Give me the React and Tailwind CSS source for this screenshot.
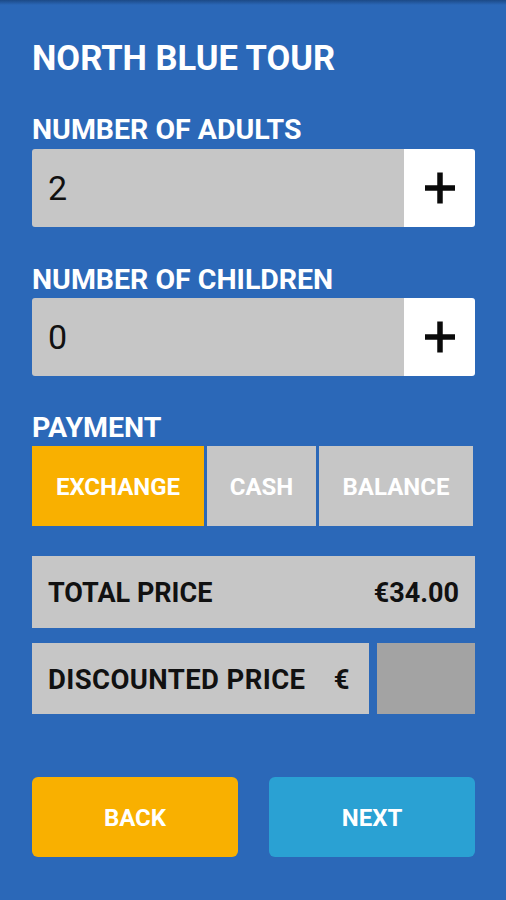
import React from "react";

function Plus() {
  return (
    <svg width="32" height="34" viewBox="0 0 32 34" fill="none">
      <path d="M16 1.5V32.5M1 17H31" stroke="#0a0a0a" strokeWidth="5.5" />
    </svg>
  );
}

function Counter({ value }) {
  return (
    <div className="flex h-[78px] w-[443px] overflow-hidden rounded-[3px]">
      <div className="flex flex-1 items-center bg-[#c6c6c6] pl-[16px] text-[34px] text-[#111]">
        {value}
      </div>
      <div className="flex w-[71px] items-center justify-center bg-white">
        <Plus />
      </div>
    </div>
  );
}

export default function App() {
  return (
    <div
      className="relative min-h-[900px] w-[506px] bg-[#2b68b8]"
      style={{ fontFamily: "Roboto, 'Noto Sans', sans-serif" }}
    >
      <div className="h-[5px] w-full bg-gradient-to-b from-[#1c4a87] to-[#2b68b8]" />
      <div className="flex flex-col pl-[32px] pr-[31px] pt-[33px]">
        <h1 className="text-[34.5px] font-bold leading-[40px] text-white">NORTH BLUE TOUR</h1>

        <div className="mt-[36px] text-[28.5px] font-bold leading-[32px] text-white">NUMBER OF ADULTS</div>
        <div className="mt-[3px]">
          <Counter value="2" />
        </div>

        <div className="mt-[37px] text-[28.5px] font-bold leading-[32px] text-white">NUMBER OF CHILDREN</div>
        <div className="mt-[2px]">
          <Counter value="0" />
        </div>

        <div className="mt-[36px] text-[28.5px] font-bold leading-[32px] text-white">PAYMENT</div>
        <div className="mt-[2px] flex h-[80px] gap-[3px] text-[24px] font-bold text-white">
          <div className="flex w-[172px] items-center justify-center bg-[#f9b000] pt-[2px]">EXCHANGE</div>
          <div className="flex w-[109px] items-center justify-center bg-[#c6c6c6] pt-[2px]">CASH</div>
          <div className="flex w-[154px] items-center justify-center bg-[#c6c6c6] pt-[2px]">BALANCE</div>
        </div>

        <div className="mt-[30px] flex h-[72px] w-[443px] items-center justify-between bg-[#c6c6c6] pl-[16px] pr-[16px] pt-[2px] text-[27px] font-bold text-[#111]">
          <span>TOTAL PRICE</span>
          <span>€34.00</span>
        </div>

        <div className="mt-[15px] flex h-[71px] w-[443px] gap-[8px]">
          <div className="flex w-[337px] items-center justify-between bg-[#c6c6c6] pl-[16px] pr-[19px] pt-[2px] text-[27.5px] font-bold tracking-[0.4px] text-[#111]">
            <span>DISCOUNTED PRICE</span>
            <span>€</span>
          </div>
          <div className="flex-1 bg-[#a3a3a3]" />
        </div>

        <div className="mt-[63px] flex h-[80px] w-[443px] gap-[31px] text-[24px] font-bold text-white">
          <div className="flex flex-1 items-center justify-center rounded-[6px] bg-[#f9b000] pt-[2px]">BACK</div>
          <div className="flex flex-1 items-center justify-center rounded-[6px] bg-[#2aa1d3] pt-[2px]">NEXT</div>
        </div>
      </div>
    </div>
  );
}
